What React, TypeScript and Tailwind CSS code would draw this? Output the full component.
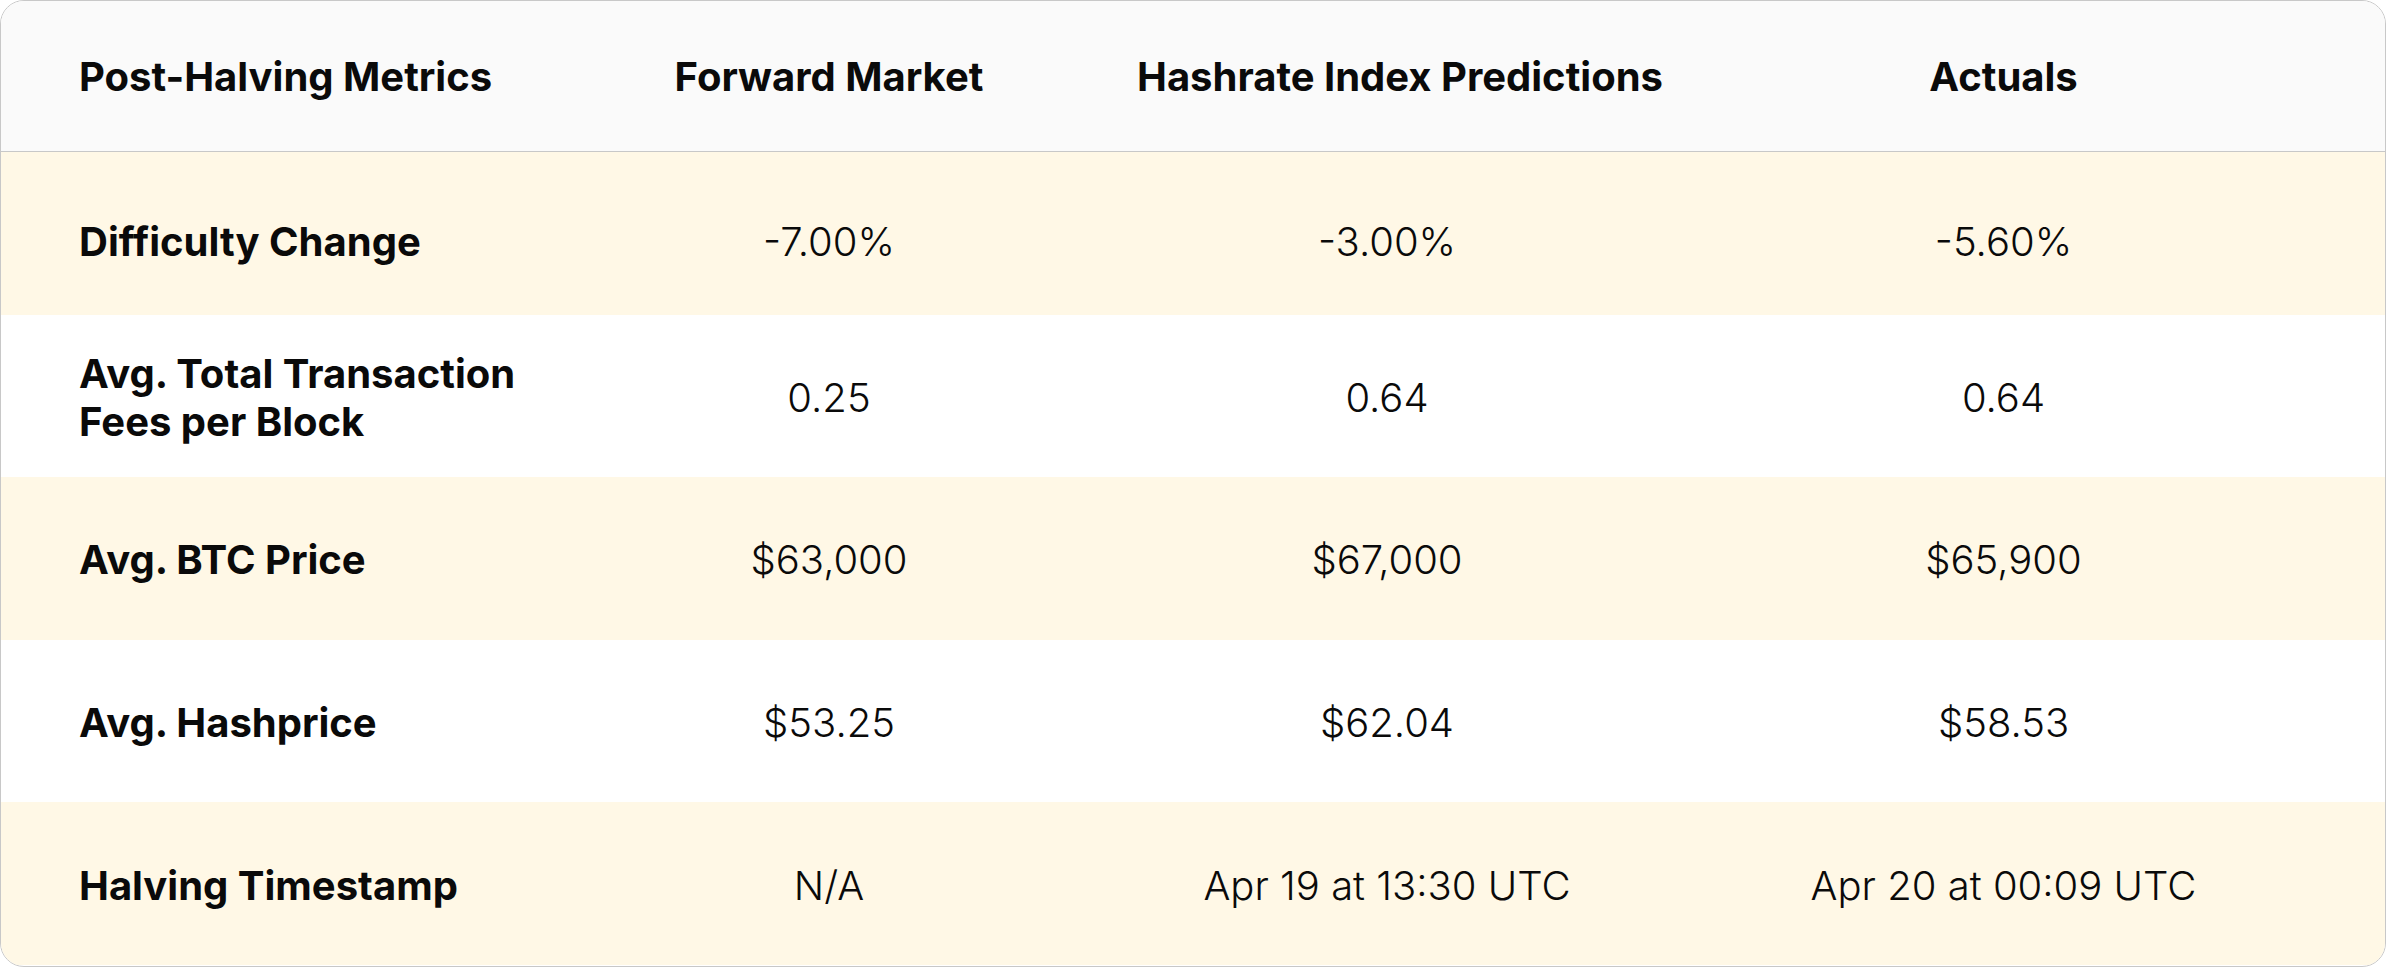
const rows = [
  { label: ["Difficulty Change"], fwd: "-7.00%", pred: "-3.00%", actual: "-5.60%", tint: true },
  { label: ["Avg. Total Transaction", "Fees per Block"], fwd: "0.25", pred: "0.64", actual: "0.64", tint: false },
  { label: ["Avg. BTC Price"], fwd: "$63,000", pred: "$67,000", actual: "$65,900", tint: true },
  { label: ["Avg. Hashprice"], fwd: "$53.25", pred: "$62.04", actual: "$58.53", tint: false },
  { label: ["Halving Timestamp"], fwd: "N/A", pred: "Apr 19 at 13:30 UTC", actual: "Apr 20 at 00:09 UTC", tint: true },
];

export default function App() {
  return (
    <div className="w-[2386px] h-[967px] bg-white font-['Inter',sans-serif] text-[#0a0a0a]">
      <div className="h-full border border-[#c8c8c8] rounded-[24px] overflow-hidden flex flex-col">
        {/* Header */}
        <div className="grid grid-cols-[505px_646px_470px_1fr] h-[151px] bg-[#fafafa] border-b border-[#c8c8c8] text-[40px] font-bold">
          <div className="flex items-center pl-[78px] pt-[2px]">Post-Halving Metrics</div>
          <div className="flex items-center justify-center pt-[2px]">Forward Market</div>
          <div className="flex items-center justify-center pl-[26px] pt-[2px] whitespace-nowrap">Hashrate Index Predictions</div>
          <div className="flex items-center justify-center pt-[2px]">Actuals</div>
        </div>

        {/* Rows */}
        {rows.map((r, i) => (
          <div
            key={r.label[0]}
            className={`grid grid-cols-[505px_646px_470px_1fr] h-[162.6px] text-[40px] ${r.tint ? "bg-[#fff8e6]" : "bg-white"} ${i === 0 ? "pt-[18px]" : "pt-[4px]"}`}
          >
            <div className="flex flex-col justify-center pl-[78px] font-bold leading-[48px] whitespace-nowrap">
              {r.label.map((l) => (
                <span key={l}>{l}</span>
              ))}
            </div>
            <div className="flex items-center justify-center font-light">{r.fwd}</div>
            <div className="flex items-center justify-center font-light whitespace-nowrap">{r.pred}</div>
            <div className="flex items-center justify-center font-light">{r.actual}</div>
          </div>
        ))}
      </div>
    </div>
  );
}
